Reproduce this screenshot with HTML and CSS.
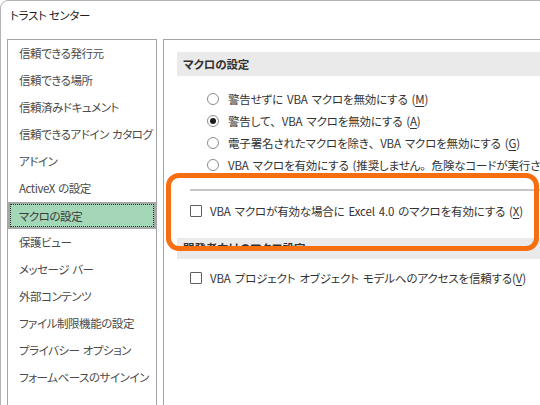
FILE: index.html
```html
<!DOCTYPE html>
<html lang="ja">
<head>
<meta charset="utf-8">
<title>トラスト センター</title>
<link rel="stylesheet" href="styles.css">
</head>
<body>
<div class="window">
  <div class="titlebar">トラスト センター</div>
  <div class="content">
    <ul class="nav">
      <li>信頼できる発行元</li>
      <li>信頼できる場所</li>
      <li>信頼済みドキュメント</li>
      <li>信頼できるアドイン カタログ</li>
      <li>アドイン</li>
      <li>ActiveX の設定</li>
      <li class="selected"><span class="focus">マクロの設定</span></li>
      <li>保護ビュー</li>
      <li>メッセージ バー</li>
      <li>外部コンテンツ</li>
      <li>ファイル制限機能の設定</li>
      <li>プライバシー オプション</li>
      <li>フォームベースのサインイン</li>
    </ul>
    <div class="panel">
      <div class="sec-head">マクロの設定</div>
      <div class="radios">
        <div class="opt"><span class="radio"></span><span>警告せずに VBA マクロを無効にする (<u>M</u>)</span></div>
        <div class="opt"><span class="radio checked"></span><span>警告して<span class="fw">、</span>VBA マクロを無効にする (<u>A</u>)</span></div>
        <div class="opt"><span class="radio"></span><span>電子署名されたマクロを除き<span class="fw">、</span>VBA マクロを無効にする (<u>G</u>)</span></div>
        <div class="opt"><span class="radio"></span><span>VBA マクロを有効にする (推奨しません<span class="fw">。</span>危険なコードが実行される可能性があります) (<u>E</u>)</span></div>
      </div>
      <div class="separator"></div>
      <div class="check-row"><span class="checkbox"></span><span>VBA マクロが有効な場合に Excel 4.0 のマクロを有効にする (<u>X</u>)</span></div>
      <div class="sec-head cut"><span class="cut-text">開発者向けのマクロ設定</span></div>
      <div class="check-row second"><span class="checkbox"></span><span>VBA プロジェクト オブジェクト モデルへのアクセスを信頼する(<u>V</u>)</span></div>
    </div>
  </div>
  <div class="callout"></div>
</div>
</body>
</html>
```

FILE: styles.css
```css
html, body {
  margin: 0;
  padding: 0;
  background: #ffffff;
}
body {
  width: 540px;
  height: 405px;
  overflow: hidden;
  font-family: "Noto Sans CJK JP", "Noto Sans", sans-serif;
  font-feature-settings: "palt";
  font-size: 11.5px;
  color: #333333;
}
.fw {
  font-feature-settings: normal;
}
.window {
  position: relative;
  width: 620px;
  height: 460px;
  box-sizing: border-box;
  border: 1px solid #b4b4b4;
  border-radius: 8px 8px 0 0;
  background: #ffffff;
}
.titlebar {
  height: 38px;
  line-height: 28px;
  padding-left: 9px;
  color: #1e1e1e;
  font-size: 11.5px;
  letter-spacing: -0.3px;
  white-space: nowrap;
}
.content {
  display: flex;
  gap: 6px;
  padding-left: 6px;
}
.nav {
  list-style: none;
  margin: 0;
  padding: 0;
  width: 150px;
  height: 420px;
  box-sizing: border-box;
  border: 1px solid #a5a5a5;
  flex: none;
  letter-spacing: -0.45px;
  word-spacing: 1px;
}
.nav li {
  height: 27px;
  line-height: 27px;
  padding-left: 11px;
  color: #4a4a4a;
  white-space: nowrap;
  box-sizing: border-box;
}
.nav li.selected {
  padding: 2px;
  background: #a3d7b8;
  box-shadow: inset 0 0 0 2px #a8a8a8;
  color: #3a3a3a;
}
.nav li.selected .focus {
  display: block;
  height: 23px;
  line-height: 22px;
  box-sizing: border-box;
  border: 1px dotted #2a2a2a;
  padding-left: 8px;
}
.panel {
  flex: 1;
  height: 420px;
  box-sizing: border-box;
  border: 1px solid #a5a5a5;
  padding: 12px 0 0 13px;
  white-space: nowrap;
  overflow: hidden;
  letter-spacing: -0.15px;
  word-spacing: 1.5px;
}
.sec-head {
  height: 24px;
  line-height: 24px;
  background: #eaeaea;
  padding-left: 6px;
  font-weight: 700;
  color: #333333;
}
.radios {
  margin-top: 12px;
  padding-left: 30px;
}
.opt {
  display: flex;
  align-items: center;
  gap: 9px;
  height: 22px;
}
.radio {
  width: 12px;
  height: 12px;
  box-sizing: border-box;
  border: 1px solid #8a8a8a;
  border-radius: 50%;
  flex: none;
  display: flex;
  align-items: center;
  justify-content: center;
  background: #fff;
}
.radio.checked::after {
  content: "";
  width: 6px;
  height: 6px;
  border-radius: 50%;
  background: #1c1c1c;
}
.separator {
  margin: 13px 0 0 13px;
  height: 2px;
  background: #c6c6c6;
}
.check-row {
  display: flex;
  align-items: center;
  gap: 8px;
  height: 22px;
  margin: 9px 0 0 13px;
}
.check-row.second {
  margin-top: 8px;
}
.checkbox {
  width: 12px;
  height: 12px;
  box-sizing: border-box;
  border: 1px solid #5e5e5e;
  border-radius: 1px;
  flex: none;
  background: #fff;
}
.sec-head.cut {
  margin-top: 16px;
  height: 21px;
}
.cut-text {
  display: block;
  height: 13px;
  overflow: hidden;
  line-height: 20px;
}
u {
  text-underline-offset: 2px;
}
.callout {
  position: absolute;
  left: 165px;
  top: 172px;
  width: 373px;
  height: 78px;
  box-sizing: border-box;
  border: 5px solid #f56e0f;
  border-radius: 13px;
}
```
